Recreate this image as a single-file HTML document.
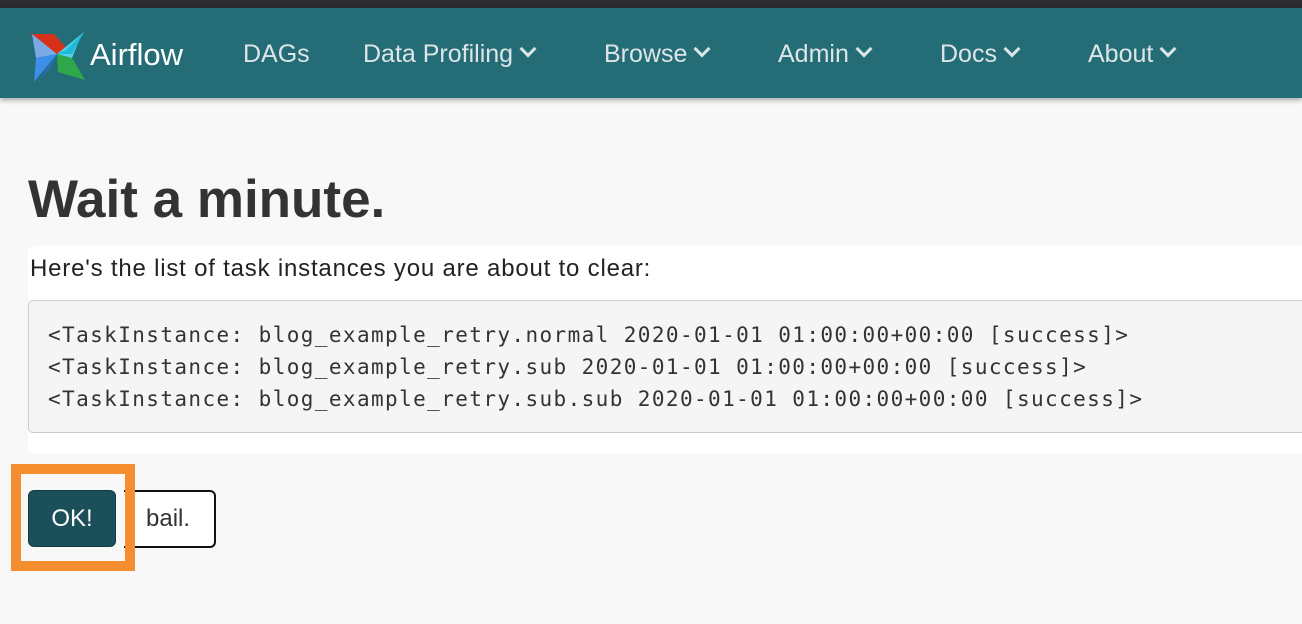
<!DOCTYPE html><html><head><style>
body{margin:0;width:1302px;height:624px;background:#f8f8f8;font-family:"Liberation Sans",sans-serif;position:relative;overflow:hidden}
.top{position:absolute;left:0;top:0;width:1302px;height:8px;background:#2d2d2f}
.nav{position:absolute;left:0;top:8px;width:1302px;height:90px;background:#246d77;box-shadow:0 2px 5px rgba(0,0,0,.35)}
.nav span{position:absolute;top:32px;color:#dde5e6;font-size:25px}
.car{display:inline-block;width:9px;height:9px;border-right:3.5px solid #dde5e6;border-bottom:3.5px solid #dde5e6;transform:rotate(45deg);margin-left:9px;position:relative;top:-7px}
h1{position:absolute;left:28px;top:169px;margin:0;font-size:53px;color:#333;font-weight:bold}
.panel{position:absolute;left:28px;top:246px;width:1290px;height:208px;background:#fff;border-radius:6px}
.panel p{position:absolute;left:2px;top:9px;margin:0;font-size:24px;letter-spacing:0.8px;color:#222}
pre{position:absolute;left:0;top:54px;width:1290px;height:133px;margin:0;background:#f5f5f5;border:1px solid #ccc;border-radius:5px;font-family:"DejaVu Sans Mono","Liberation Mono",monospace;font-size:21px;letter-spacing:1.4px;line-height:32px;padding:18px 0 0 19px;box-sizing:border-box;color:#333}
.orange{position:absolute;left:11px;top:464px;width:124px;height:107px;border:10px solid #f68d2e;box-sizing:border-box}
.ok{position:absolute;left:28px;top:490px;width:88px;height:57px;background:#1b4f59;border:1px solid #123c44;border-radius:6px;box-sizing:border-box;color:#fff;font-size:24px;text-align:center;line-height:55px}
.bail{position:absolute;left:124px;top:490px;width:92px;height:58px;background:#fff;border:2px solid #111;border-left:none;border-radius:0 6px 6px 0;box-sizing:border-box;color:#333;font-size:24px;line-height:54px;padding-left:22px}
</style></head><body>
<div class="top"></div>
<div class="nav">
<svg style="position:absolute;left:28px;top:16px" width="58" height="60" viewBox="0 0 58 60">
<polygon points="2,10 26,10 42,28 29,30" fill="#d8311a"/>
<polygon points="4,10 29,30 8,34" fill="#7aa9e5"/>
<polygon points="29,30 8,34 6,58" fill="#3b8fe8"/>
<polygon points="29,30 10,58 22,44" fill="#2a6bd6"/>
<polygon points="29,30 30,48 57,56 44,34" fill="#2ea84a"/>
<polygon points="29,30 44,34 52,14 56,8" fill="#4ed4ee"/>
<polygon points="29,30 38,26 56,8 44,30" fill="#1fb9d8"/>
</svg>
<span style="left:90px;top:29px;color:#fff;font-size:31px">Airflow</span>
<span style="left:243px">DAGs</span>
<span style="left:363px">Data Profiling<i class="car"></i></span>
<span style="left:604px">Browse<i class="car"></i></span>
<span style="left:778px">Admin<i class="car"></i></span>
<span style="left:940px">Docs<i class="car"></i></span>
<span style="left:1088px">About<i class="car"></i></span>
</div>
<h1>Wait a minute.</h1>
<div class="panel"><p>Here's the list of task instances you are about to clear:</p>
<pre>&lt;TaskInstance: blog_example_retry.normal 2020-01-01 01:00:00+00:00 [success]&gt;
&lt;TaskInstance: blog_example_retry.sub 2020-01-01 01:00:00+00:00 [success]&gt;
&lt;TaskInstance: blog_example_retry.sub.sub 2020-01-01 01:00:00+00:00 [success]&gt;</pre></div>
<div class="bail">bail.</div>
<div class="orange"></div>
<div class="ok">OK!</div>
</body></html>
